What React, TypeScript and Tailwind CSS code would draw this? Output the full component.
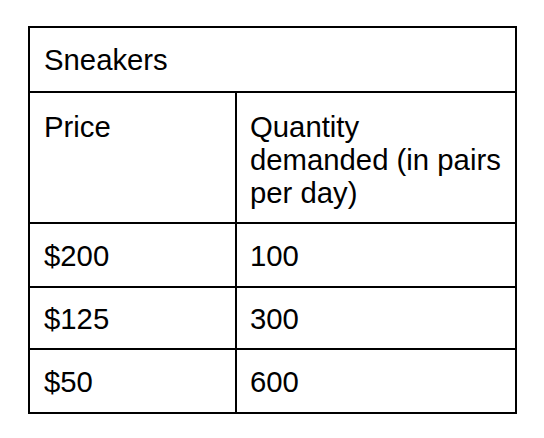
import React from "react";

const rows = [
  { price: "$200", qty: "100", h: "h-[64px]" },
  { price: "$125", qty: "300", h: "h-[62px]" },
  { price: "$50", qty: "600", h: "h-[64px]" },
];

export default function App() {
  return (
    <div
      className="w-[544px] h-[438px] bg-white pt-[26px] pl-[28px] text-black"
      style={{ fontFamily: '"Liberation Sans", Arial, sans-serif' }}
    >
      <div className="w-[489px] border-2 border-black text-[29.3px] leading-[33px]">
        <div className="h-[63px] flex items-center px-[14px]">Sneakers</div>
        <div className="h-[131px] flex border-t-2 border-black">
          <div className="w-[207px] shrink-0 border-r-2 border-black px-[14px] pt-[17px]">Price</div>
          <div className="flex-1 pl-[13px] pr-[12px] pt-[17px]">Quantity demanded (in pairs per day)</div>
        </div>
        {rows.map((r) => (
          <div key={r.price} className={`${r.h} flex border-t-2 border-black`}>
            <div className="w-[207px] shrink-0 border-r-2 border-black px-[14px] flex items-center">{r.price}</div>
            <div className="flex-1 px-[13px] flex items-center">{r.qty}</div>
          </div>
        ))}
      </div>
    </div>
  );
}
